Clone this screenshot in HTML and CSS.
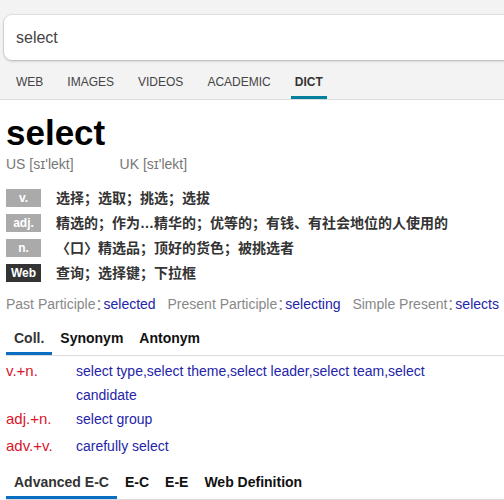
FILE: index.html
```html
<!DOCTYPE html>
<html lang="en">
<head>
<meta charset="utf-8">
<title>select - Dictionary</title>
<link rel="stylesheet" href="styles.css">
</head>
<body>
<header class="top">
  <div class="search">select</div>
  <nav class="scopes">
    <span class="scope">WEB</span>
    <span class="scope">IMAGES</span>
    <span class="scope">VIDEOS</span>
    <span class="scope">ACADEMIC</span>
    <span class="scope active">DICT</span>
  </nav>
</header>
<main class="dict">
  <h1 class="hw">select</h1>
  <div class="pron">
    <span class="pr">US [sɪ'lekt]</span>
    <span class="pr">UK [sɪ'lekt]</span>
  </div>
  <ul class="defs">
    <li class="def"><span class="pos">v.</span><span class="meaning">选择；选取；挑选；选拔</span></li>
    <li class="def"><span class="pos">adj.</span><span class="meaning">精选的；作为…精华的；优等的；有钱、有社会地位的人使用的</span></li>
    <li class="def"><span class="pos">n.</span><span class="meaning">〈口〉精选品；顶好的货色；被挑选者</span></li>
    <li class="def"><span class="pos web">Web</span><span class="meaning">查询；选择键；下拉框</span></li>
  </ul>
  <div class="infl">
    <span class="ilbl">Past Participle<span class="colon">：</span></span><span class="ival">selected</span>
    <span class="ilbl">Present Participle<span class="colon">：</span></span><span class="ival">selecting</span>
    <span class="ilbl">Simple Present<span class="colon">：</span></span><span class="ival">selects</span>
  </div>
  <nav class="tabs">
    <span class="tab active">Coll.</span>
    <span class="tab">Synonym</span>
    <span class="tab">Antonym</span>
  </nav>
  <div class="colls">
    <div class="coll"><span class="ckey">v.+n.</span><span class="cval">select type,select theme,select leader,select team,select candidate</span></div>
    <div class="coll"><span class="ckey">adj.+n.</span><span class="cval">select group</span></div>
    <div class="coll gap"><span class="ckey">adv.+v.</span><span class="cval">carefully select</span></div>
  </div>
  <nav class="tabs">
    <span class="tab active">Advanced E-C</span>
    <span class="tab">E-C</span>
    <span class="tab">E-E</span>
    <span class="tab">Web Definition</span>
  </nav>
</main>
</body>
</html>
```

FILE: styles.css
```css
* { box-sizing: border-box; }
html, body {
  margin: 0;
  padding: 0;
  background: #fff;
  overflow: hidden;
}
body {
  font-family: "Liberation Sans", Arial, "Noto Sans CJK SC", sans-serif;
  color: #333;
}

.top {
  background: #f3f3f3;
  border-bottom: 1px solid #dcdcdc;
  padding-top: 15px;
  overflow: hidden;
}
.search {
  margin-left: 4px;
  width: 540px;
  height: 45px;
  background: #fff;
  border-radius: 8px;
  box-shadow: 0 0 0 1px rgba(0,0,0,0.06), 0 1px 3px rgba(0,0,0,0.22);
  padding-left: 12px;
  font-size: 16px;
  line-height: 45px;
  color: #444;
}
.scopes {
  display: flex;
  gap: 16px;
  padding-left: 12px;
}
.scope {
  padding: 14px 4px 6px;
  font-size: 12px;
  line-height: 16px;
  color: #444;
  border-bottom: 3px solid transparent;
}
.scope.active {
  font-weight: bold;
  color: #333;
  border-bottom-color: #00809d;
}

.dict {
  padding: 0 6px;
}
.hw {
  margin: 13px 0 0;
  font-size: 35px;
  line-height: 40px;
  font-weight: bold;
  color: #000;
}
.pron {
  margin-top: 1px;
  display: flex;
  font-size: 14px;
  line-height: 20px;
  color: #777;
}
.pr { margin-right: 46px; }

.defs {
  list-style: none;
  margin: 15px 0 0;
  padding: 0;
}
.def {
  display: flex;
  align-items: center;
  height: 18px;
  margin-bottom: 7px;
}
.def:last-child { margin-bottom: 0; }
.pos {
  flex: none;
  width: 35px;
  height: 18px;
  line-height: 18px;
  margin-right: 15px;
  background: #aaa;
  color: #fff;
  font-size: 12px;
  font-weight: bold;
  text-align: center;
}
.pos.web { background: #333; }
.meaning {
  font-family: "Liberation Sans", "Noto Sans CJK SC", sans-serif;
  font-size: 14px;
  line-height: 18px;
  font-weight: bold;
  color: #333;
  white-space: nowrap;
}

.infl {
  margin-top: 11px;
  font-size: 14px;
  line-height: 20px;
  white-space: nowrap;
}
.ilbl { color: #888; }
.colon {
  font-family: "Noto Sans CJK SC", sans-serif;
  font-feature-settings: "halt";
  margin-right: 1px;
}
.ival { color: #2424a8; margin-right: 8px; }

.tabs {
  display: flex;
  border-bottom: 1px solid #dcdcdc;
  margin: 0 -6px 0 0;
}
.tab {
  padding: 16px 8px 6px;
  font-size: 14px;
  line-height: 16px;
  font-weight: bold;
  color: #111;
  border-bottom: 3px solid transparent;
}
.tab.active {
  color: #333;
  border-bottom-color: #0a6fc2;
}

.colls {
  padding-top: 3px;
}
.coll {
  display: flex;
  padding-right: 40px;
  line-height: 24px;
}
.coll.gap { margin-top: 3px; }
.ckey {
  flex: none;
  width: 70px;
  font-size: 15px;
  color: #d9142b;
}
.cval {
  flex: 1;
  font-size: 14px;
  color: #2424a8;
}
```
